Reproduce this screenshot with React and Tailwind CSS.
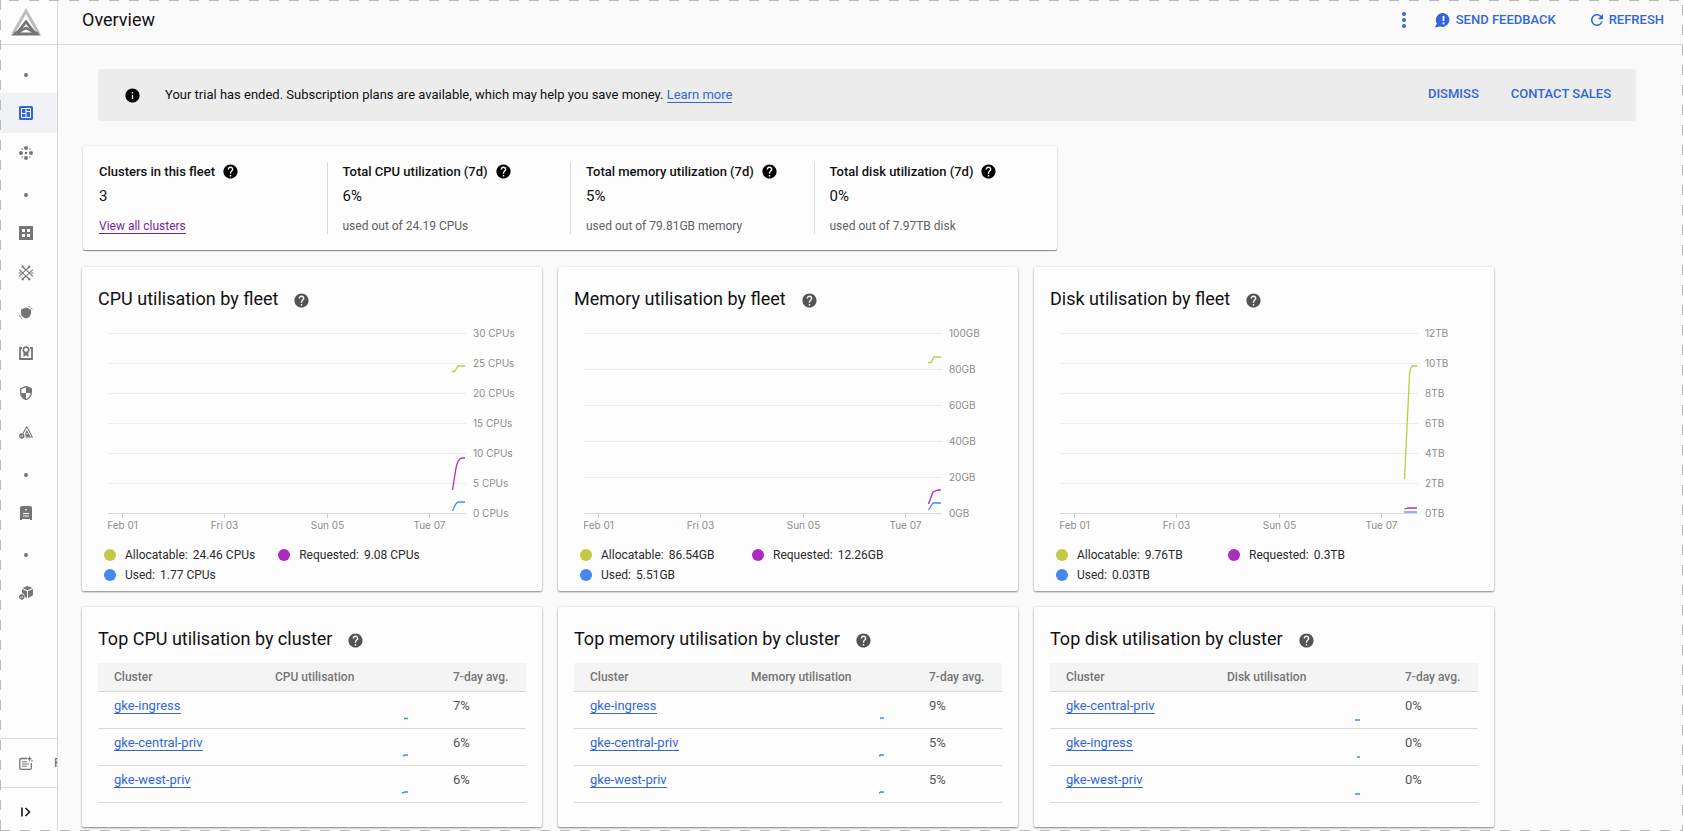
import React from "react";
import { MdHelp, MdInfo, MdRefresh, MdSecurity } from "react-icons/md";

const OLIVE = "#c0ca45";
const PURPLE = "#ad2cc0";
const BLUE = "#4688f1";

const Glyph = ({ children, size = 14 }) => (
  <svg width={size} height={size} viewBox="0 0 14 14" fill="none" aria-hidden="true">
    {children}
  </svg>
);

const Logo = () => (
  <svg width="32" height="28" viewBox="0 0 32 28" aria-hidden="true">
    <path d="M16 0 L30.500 25.500 H27 L16 6 L5 25.500 H1.500 Z" fill="#bdbdbd" />
    <path d="M16 11.500 L26.500 25 H23 L16 16 L9 25 H5.500 Z" fill="#757575" />
    <path d="M16 18.500 L27 24 L31 27.500 H1 L5 24 Z M16 21.500 L10 24.500 H22 Z" fill="#757575" fillRule="evenodd" />
  </svg>
);

const OverviewIcon = () => (
  <Glyph>
    <rect width="14" height="14" rx="1.500" fill="#3367d6" />
    <path d="M2.500 2.500h9v9h-9z M7 2.500v9 M2.500 7.500H7 M7 5.500h4.500" stroke="#fff" />
  </Glyph>
);
const ClustersIcon = () => (
  <Glyph>
    <g fill="#757575">
      <circle cx="7" cy="2" r="2" /><circle cx="7" cy="12" r="2" />
      <circle cx="2" cy="7" r="2" /><circle cx="12" cy="7" r="2" />
      <circle cx="7" cy="7" r="1.300" />
      <g opacity=".7">
        <circle cx="3.200" cy="3.200" r=".9" /><circle cx="10.800" cy="3.200" r=".9" />
        <circle cx="3.200" cy="10.800" r=".9" /><circle cx="10.800" cy="10.800" r=".9" />
      </g>
    </g>
  </Glyph>
);
const WorkloadsIcon = () => (
  <Glyph>
    <path fillRule="evenodd" fill="#757575" d="M0 0h14v14H0z M3 3v3h3V3z M8 3v3h3V3z M3 8v3h3V8z M8 8v3h3V8z" />
  </Glyph>
);
const MeshIcon = () => (
  <Glyph size={16}>
    <path d="M1 4l9 8.500 M4 1.500l9 8.500 M10 1.500l-9 8.500 M13 4l-9 8.500 M0.500 7h2 M11.500 7h2" stroke="#757575" />
    <g fill="#757575">
      <circle cx="4" cy="1.500" r="1" /><circle cx="10" cy="1.500" r="1" />
      <circle cx="4" cy="12.500" r="1" /><circle cx="10" cy="12.500" r="1" />
    </g>
    <path d="M7 4.800 9.200 7 7 9.200 4.800 7z" fill="#fdfdfd" />
  </Glyph>
);
const PolicyIcon = () => (
  <Glyph>
    <path d="M7 1.500l5 2v3.500c0 2.500-2 4.700-5 5.500-3-.8-5-3-5-5.500V3.500z" fill="#757575" />
    <path d="M9.500 .6c2 .2 3.500 1.500 4 3.600 M.5 9c.3 2 1.500 3.600 3.500 4.300" stroke="#757575" strokeWidth=".9" strokeDasharray="2 .8" />
  </Glyph>
);
const FeatureIcon = () => (
  <Glyph>
    <path d="M3 2H1v11h12V2h-2" stroke="#757575" strokeWidth="1.800" />
    <circle cx="7" cy="3.800" r="2.700" stroke="#757575" strokeWidth="1.600" />
    <path d="M4.500 6v5L7 9.300 9.500 11V6L7 7.300z" fill="#757575" />
  </Glyph>
);
const MigrateIcon = () => (
  <Glyph>
    <path d="M7.800 .6 13.300 11H6.500 M7.800 .6 4 7.500" stroke="#757575" strokeWidth="1.100" />
    <path d="M7.800 4 11.500 10.800H7 L6 8z" fill="#757575" />
    <circle cx="8" cy="7.800" r=".8" fill="#fdfdfd" />
    <circle cx="2.700" cy="10" r="2" stroke="#757575" strokeWidth="1.300" />
    <path d="M2.700 7v6 M0 10h5.500" stroke="#757575" strokeWidth=".7" />
  </Glyph>
);
const CatalogIcon = () => (
  <Glyph>
    <path fillRule="evenodd" fill="#757575" d="M3 0h8a2 2 0 0 1 2 2v12h-2v-1H3v1H1V2a2 2 0 0 1 2-2z M4 7v1h6V7z M4 9.500v1h6v-1z M6.300 3v1.400h1.400V3z" />
  </Glyph>
);
const PackageIcon = () => (
  <Glyph>
    <path d="M8.500 0l5 2-5 2.300-5-2.300z M14 3v6.200L9 12V5.200z M3 3l5 2.200V12l-2.300-1.200L5 8 3 7.200z" fill="#757575" />
    <circle cx="2.700" cy="11" r="2" stroke="#757575" strokeWidth="1.300" />
    <path d="M2.700 8v6 M0 11h5.500" stroke="#757575" strokeWidth=".7" />
  </Glyph>
);
const NotesIcon = () => (
  <Glyph>
    <path d="M8 2.500H2A1.300 1.300 0 0 0 .8 3.800v8.400A1.300 1.300 0 0 0 2 13.300h9a1.300 1.300 0 0 0 1.300-1.300V7" stroke="#757575" strokeWidth="1.300" />
    <path d="M3 5.700h5 M3 8h7 M3 10.300h5" stroke="#757575" strokeWidth="1.100" />
    <path d="M10.500 0l.8 2 2 .8-2 .8-.8 2-.8-2-2-.8 2-.8z M13 3.500l.4 1 .6.300-.6.400-.4 1-.4-1-.6-.4.600-.3z" fill="#757575" />
  </Glyph>
);
const ExpandIcon = () => (
  <svg width="10" height="10" viewBox="0 0 10 10" fill="none" aria-hidden="true">
    <path d="M1 .5v9 M4.500 1l4 4-4 4" stroke="#212121" strokeWidth="1.700" />
  </svg>
);
const FeedbackIcon = () => (
  <svg width="16" height="15" viewBox="0 0 16 15" aria-hidden="true">
    <path d="M8.500 0a7 7 0 1 1-3.500 13.500L0 14.500 1.800 10.500A7 7 0 0 1 8.500 0z" fill="#3367d6" />
    <path d="M7.600 3h1.800v5H7.600z M7.600 9.500h1.800v1.800H7.600z" fill="#fff" />
  </svg>
);

const NAV = [
  { dot: true },
  { label: "Overview", icon: OverviewIcon, active: true },
  { label: "Clusters", icon: ClustersIcon },
  { dot: true },
  { label: "Workloads", icon: WorkloadsIcon },
  { label: "Service Mesh", icon: MeshIcon },
  { label: "Policy", icon: PolicyIcon },
  { label: "Features", icon: FeatureIcon },
  { label: "Security", icon: () => <MdSecurity size={16} className="text-[#757575]" /> },
  { label: "Migrate", icon: MigrateIcon },
  { dot: true },
  { label: "Catalog", icon: CatalogIcon },
  { dot: true },
  { label: "Packages", icon: PackageIcon },
];

function Sidebar() {
  return (
    <aside className="flex w-[58px] shrink-0 flex-col overflow-hidden border-r border-[#d8d8d8] bg-[#fdfdfd]">
      <div className="flex h-[45px] shrink-0 items-center border-b border-[#dadada] pl-[10px]">
        <Logo />
      </div>
      <nav className="flex flex-col pt-2">
        {NAV.map((item, i) =>
          item.dot ? (
            <div key={i} className="flex h-10 w-[52px] items-center justify-center pt-1">
              <span className="size-1 rounded-full bg-[#757575]" />
            </div>
          ) : (
            <a
              key={i}
              href="#"
              aria-label={item.label}
              className={item.active ? "flex h-10 bg-[#eff1f4]" : "flex h-10"}
            >
              <span className="flex w-[52px] items-center justify-center">
                <item.icon />
              </span>
            </a>
          )
        )}
      </nav>
      <div className="mt-auto">
        <a href="#" className="flex h-[49px] items-center border-t border-[#dadada] whitespace-nowrap text-[13px] text-[#616161]">
          <span className="flex w-[52px] shrink-0 items-center justify-center">
            <NotesIcon />
          </span>
          <span className="pl-[2px]">Release notes</span>
        </a>
        <button aria-label="Expand navigation" className="flex h-[44px] w-full items-center border-t border-[#dadada] pt-1">
          <span className="flex w-[52px] justify-center">
            <ExpandIcon />
          </span>
        </button>
      </div>
    </aside>
  );
}

function Header() {
  return (
    <header className="flex h-[45px] shrink-0 items-center border-b border-[#dadada] pr-[19px] pb-1 pl-6">
      <h1 className="text-[18px] leading-6 text-[#111]">Overview</h1>
      <div className="ml-auto flex items-center text-[13px] font-medium text-[#3367d6]">
        <button aria-label="More actions" className="flex w-4 justify-center">
          <svg width="4" height="16" viewBox="0 0 4 16" fill="#3367d6" aria-hidden="true">
            <circle cx="2" cy="2" r="2" /><circle cx="2" cy="8" r="2" /><circle cx="2" cy="14" r="2" />
          </svg>
        </button>
        <button className="ml-[23px] flex items-center gap-[5px]">
          <FeedbackIcon />
          SEND FEEDBACK
        </button>
        <button className="ml-8 flex items-center gap-[3px]">
          <MdRefresh size={18} />
          REFRESH
        </button>
      </div>
    </header>
  );
}

function Banner() {
  return (
    <section className="mx-4 flex h-[52px] items-center rounded-[3px] bg-[#ececec] pr-[25px] pl-[26px]">
      <MdInfo size={17} className="text-black" />
      <p className="ml-6 text-[13px] text-[#111]">
        Your trial has ended. Subscription plans are available, which may help you save money.{" "}
        <a href="#" className="border-b border-[#3367d6] text-[#3367d6]">Learn more</a>
      </p>
      <div className="ml-auto flex gap-8 pb-[2px] text-[13px] font-medium text-[#3367d6]">
        <button>DISMISS</button>
        <button>CONTACT SALES</button>
      </div>
    </section>
  );
}

const SUMMARY = [
  { title: "Clusters in this fleet", value: "3", link: "View all clusters" },
  { title: "Total CPU utilization (7d)", value: "6%", note: "used out of 24.19 CPUs" },
  { title: "Total memory utilization (7d)", value: "5%", note: "used out of 79.81GB memory" },
  { title: "Total disk utilization (7d)", value: "0%", note: "used out of 7.97TB disk" },
];

function Summary() {
  return (
    <section className="mt-[25px] ml-px grid w-full max-w-[974px] grid-cols-4 rounded-[2px] bg-[#fdfdfd] py-4 shadow-[0_1px_1px_rgba(0,0,0,0.45),0_0_2px_rgba(0,0,0,0.12)]">
      {SUMMARY.map((s, i) => (
        <div key={s.title} className={i ? "h-[72px] border-l border-[#dadada] px-[15px]" : "h-[72px] px-4"}>
          <h2 className="flex items-center gap-[7px] text-[13px] leading-5 font-medium text-[#111]">
            {s.title}
            <MdHelp size={17} className="mb-[2px] text-black" />
          </h2>
          <p className="mt-1 text-[15px] leading-5 text-[#111]">{s.value}</p>
          <p className="mt-2 text-[12px] leading-6 text-[#616161]">
            {s.link ? <a href="#" className="border-b border-[#7b1fa2] text-[#7b1fa2]">{s.link}</a> : s.note}
          </p>
        </div>
      ))}
    </section>
  );
}

const CHARTS = [
  {
    title: "CPU utilisation by fleet",
    ticks: ["30 CPUs", "25 CPUs", "20 CPUs", "15 CPUs", "10 CPUs", "5 CPUs", "0 CPUs"],
    lines: [
      { color: OLIVE, d: "M344 38.500H346.500L350 33H357" },
      { color: PURPLE, d: "M344.500 157L348 135Q350 125 354 125H357" },
      { color: BLUE, d: "M344.500 178Q348 169 350.500 169H357" },
    ],
    legend: [["Allocatable:", "24.46 CPUs"], ["Requested:", "9.08 CPUs"], ["Used:", "1.77 CPUs"]],
  },
  {
    title: "Memory utilisation by fleet",
    ticks: ["100GB", "80GB", "60GB", "40GB", "20GB", "0GB"],
    lines: [
      { color: OLIVE, d: "M344 29.500H347L350 24H357" },
      { color: PURPLE, d: "M344.500 171L349 159L354 157H357" },
      { color: BLUE, d: "M344.500 177L349 170H357" },
    ],
    legend: [["Allocatable:", "86.54GB"], ["Requested:", "12.26GB"], ["Used:", "5.51GB"]],
  },
  {
    title: "Disk utilisation by fleet",
    ticks: ["12TB", "10TB", "8TB", "6TB", "4TB", "2TB", "0TB"],
    lines: [
      { color: OLIVE, d: "M344.500 146L349.500 42Q350.500 33 353 33H357" },
      { color: PURPLE, d: "M344.500 176L348 175H357" },
      { color: BLUE, d: "M344 179H357" },
    ],
    legend: [["Allocatable:", "9.76TB"], ["Requested:", "0.3TB"], ["Used:", "0.03TB"]],
  },
];
const LEGEND_DOTS = ["bg-[#c0ca45]", "bg-[#ad2cc0]", "bg-[#4688f1]"];
const DAYS = [["Feb 01", 14.5], ["Fri 03", 116.5], ["Sun 05", 219.5], ["Tue 07", 321.5]];

function Card({ title, children, className }) {
  return (
    <section className={"rounded-[2px] bg-[#fdfdfd] px-4 pt-5 shadow-[0_1px_2px_rgba(0,0,0,0.45),0_0_3px_rgba(0,0,0,0.08)] " + className}>
      <h2 className="flex items-center gap-[15px] text-[18px] leading-6 text-[#111]">
        {title}
        <MdHelp size={17} className="mt-[2px] text-[#545454]" />
      </h2>
      {children}
    </section>
  );
}

function Chart({ ticks, lines, title }) {
  const step = 180 / (ticks.length - 1);
  return (
    <svg width="418" height="208" viewBox="0 -7 418 208" className="mt-[15px] ml-[10px] block" role="img" aria-label={title}>
      {ticks.map((t, i) => (
        <g key={t}>
          <path
            d={`M0 ${i * step + 0.5}H358`}
            stroke={i === ticks.length - 1 ? "#d9d9d9" : "#ececec"}
          />
          <text x="365" y={i * step + 4} fill="#8c8c8c" className="font-[Inter,sans-serif] text-[10px]">{t}</text>
        </g>
      ))}
      {DAYS.map(([day, x]) => (
        <g key={day}>
          <path d={`M${x} 180v5`} stroke="#d0d0d0" />
          <text x={x} y="196" textAnchor="middle" fill="#8c8c8c" className="font-[Inter,sans-serif] text-[10px]">{day}</text>
        </g>
      ))}
      {lines.map((l) => (
        <path key={l.color} d={l.d} fill="none" stroke={l.color} strokeWidth="1.300" />
      ))}
    </svg>
  );
}

function ChartCard(props) {
  return (
    <Card title={props.title} className="pb-[6px]">
      <Chart {...props} />
      <ul className="mt-[11px] ml-[6px] flex flex-wrap gap-x-[23px] text-[12px] leading-5 text-[#2b2b2b]">
        {props.legend.map(([name, value], i) => (
          <li key={name} className="flex min-w-[149px] items-center">
            <span className={"mr-[9px] size-3 rounded-full " + LEGEND_DOTS[i]} />
            <span className="mr-[5px]">{name}</span>
            <span>{value}</span>
          </li>
        ))}
      </ul>
    </Card>
  );
}

const TABLES = [
  {
    title: "Top CPU utilisation by cluster",
    column: "CPU utilisation",
    rows: [
      ["gke-ingress", "7%", "M129 8.500h4"],
      ["gke-central-priv", "6%", "M128 9l2-1h3"],
      ["gke-west-priv", "6%", "M127 9l3-1h3"],
    ],
  },
  {
    title: "Top memory utilisation by cluster",
    column: "Memory utilisation",
    rows: [
      ["gke-ingress", "9%", "M129 8h4"],
      ["gke-central-priv", "5%", "M128 9l2-1h3"],
      ["gke-west-priv", "5%", "M128 9l2-1h3"],
    ],
  },
  {
    title: "Top disk utilisation by cluster",
    column: "Disk utilisation",
    rows: [
      ["gke-central-priv", "0%", "M128 10h5"],
      ["gke-ingress", "0%", "M130 10h3"],
      ["gke-west-priv", "0%", "M128 10h5"],
    ],
  },
];

function TableCard({ title, column, rows }) {
  return (
    <Card title={title} className="pb-6">
      <table className="mt-3 w-full table-fixed border-collapse text-left text-[13px]">
        <thead>
          <tr className="h-[28px] border-b border-[#dadada] bg-[#f4f4f4] text-[12px] text-[#757575]">
            <th className="w-[161px] pl-4 font-medium">Cluster</th>
            <th className="pl-4 font-medium">{column}</th>
            <th className="w-[89px] pl-4 font-medium">7-day avg.</th>
          </tr>
        </thead>
        <tbody>
          {rows.map(([name, avg, d]) => (
            <tr key={name} className="h-[37px] border-b border-[#dadada] align-top leading-7 text-[#545454]">
              <td className="pl-4">
                <a href="#" className="border-b border-[#3367d6] text-[#3367d6]">{name}</a>
              </td>
              <td className="pt-[18px] pl-4">
                <svg width="134" height="14" viewBox="0 0 134 14" className="block" aria-hidden="true">
                  <path d={d} fill="none" stroke="#4688f1" strokeWidth="1.500" />
                </svg>
              </td>
              <td className="pl-4">{avg}</td>
            </tr>
          ))}
        </tbody>
      </table>
    </Card>
  );
}

const Frame = () => (
  <svg className="pointer-events-none absolute inset-0 h-full w-full" fill="none" aria-hidden="true">
    <g stroke="#b9b9b9" strokeWidth="2" strokeDasharray="10 10">
      <line x1="9" y1="0" x2="100%" y2="0" />
      <line x1="0" y1="100%" x2="100%" y2="100%" />
      <line x1="0" y1="0" x2="0" y2="100%" />
      <line x1="100%" y1="5" x2="100%" y2="100%" />
    </g>
  </svg>
);

export default function App() {
  return (
    <div className="relative flex min-h-screen bg-[#fafafa] font-[Roboto,sans-serif]">
      <Sidebar />
      <div className="flex min-w-0 flex-1 flex-col">
        <Header />
        <main className="px-6 pt-6 pb-[3px]">
          <div className="mr-[7px]">
            <Banner />
          </div>
          <Summary />
          <div className="mt-[17px] grid w-full max-w-[1412px] grid-cols-3 gap-4">
            {CHARTS.map((c) => <ChartCard key={c.title} {...c} />)}
            {TABLES.map((t) => <TableCard key={t.title} {...t} />)}
          </div>
        </main>
      </div>
      <Frame />
    </div>
  );
}
